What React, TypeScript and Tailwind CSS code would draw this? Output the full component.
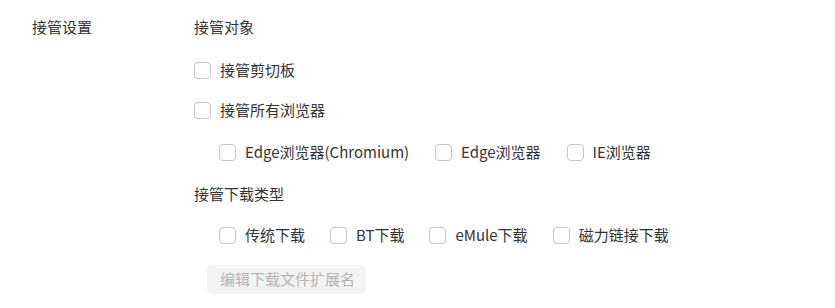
import React from "react";

function Box({ label }: { label: string }) {
  return (
    <label className="flex items-center h-[20px] cursor-pointer">
      <span className="w-[17px] h-[17px] rounded-[4px] border border-[#c4c4c4] bg-white shrink-0" />
      <span className="ml-[9px] text-[15px] leading-[20px] text-[#333]">{label}</span>
    </label>
  );
}

export default function App() {
  return (
    <div className="w-[835px] h-[308px] bg-white flex text-[15px] text-[#333] font-['Noto_Sans_CJK_SC',sans-serif]">
      <div className="w-[194px] pl-[32px] pt-[17px] leading-[20px]">接管设置</div>
      <div className="flex flex-col pt-[17px]">
        <div className="h-[20px] leading-[20px]">接管对象</div>
        <div className="mt-[23px]">
          <Box label="接管剪切板" />
        </div>
        <div className="mt-[20px]">
          <Box label="接管所有浏览器" />
        </div>
        <div className="mt-[22px] pl-[25px] flex gap-[26px]">
          <Box label="Edge浏览器(Chromium)" />
          <Box label="Edge浏览器" />
          <Box label="IE浏览器" />
        </div>
        <div className="mt-[22px] h-[20px] leading-[20px]">接管下载类型</div>
        <div className="mt-[21px] pl-[25px] flex gap-[25px]">
          <Box label="传统下载" />
          <Box label="BT下载" />
          <Box label="eMule下载" />
          <Box label="磁力链接下载" />
        </div>
        <div className="mt-[20px] pl-[13px]">
          <button className="h-[29px] w-[159px] rounded-[5px] bg-[#f3f3f3] text-[#b3b3b3] text-[15px] text-left pl-[13px]">
            编辑下载文件扩展名
          </button>
        </div>
      </div>
    </div>
  );
}
